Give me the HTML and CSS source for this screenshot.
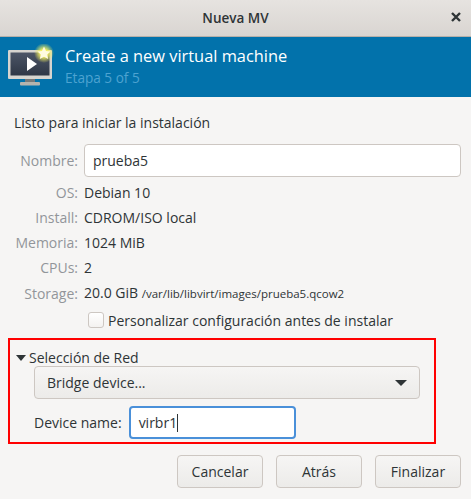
FILE: index.html
```html
<!DOCTYPE html>
<html>
<head>
    <meta charset="utf-8">
    <title>Nueva MV</title>
    <link rel="stylesheet" href="styles.css">
</head>
<body>

<div class="window">

    <div class="titlebar">
        <div class="titlebar-title">Nueva MV</div>
        <svg class="close-icon" width="10" height="10" viewBox="0 0 10 10">
            <path d="M1 1 L9 9 M9 1 L1 9" stroke="#2e3436" stroke-width="2.4" fill="none"/>
        </svg>
    </div>

    <div class="banner">
        <svg class="banner-icon" width="46" height="46" viewBox="0 0 46 46">
            <defs>
                <radialGradient id="glow">
                    <stop offset="0.35" stop-color="#f4f060"/>
                    <stop offset="1" stop-color="#f4f060" stop-opacity="0"/>
                </radialGradient>
                <linearGradient id="screen" x1="0" y1="0" x2="0" y2="1">
                    <stop offset="0" stop-color="#4c5566"/>
                    <stop offset="1" stop-color="#2f3746"/>
                </linearGradient>
            </defs>
            <rect x="0" y="6" width="44" height="29" rx="1" fill="#d6d4cf"/>
            <rect x="2.5" y="8.5" width="39" height="23" fill="url(#screen)"/>
            <rect x="17" y="35" width="10" height="3" fill="#77797a"/>
            <rect x="12" y="38" width="20" height="3.5" rx="1" fill="#b5b3ae"/>
            <path d="M19 13 L29 20 L19 27 Z" fill="#fff"/>
            <circle cx="36" cy="9" r="10" fill="url(#glow)"/>
            <path d="M36 2.5 L38 7 L42.5 7.5 L39.2 10.6 L40.2 15 L36 12.7 L31.8 15 L32.8 10.6 L29.5 7.5 L34 7 Z" fill="#fffbe0"/>
        </svg>
        <div>
            <div class="banner-title">Create a new virtual machine</div>
            <div class="banner-step">Etapa 5 of 5</div>
        </div>
    </div>

    <div class="content">

        <div class="ready-text">Listo para iniciar la instalación</div>

        <div class="summary">
            <label class="summary-label">Nombre:</label>
            <input type="text" class="text-input" value="prueba5">

            <div class="summary-label">OS:</div>
            <div class="summary-value">Debian 10</div>

            <div class="summary-label">Install:</div>
            <div class="summary-value">CDROM/ISO local</div>

            <div class="summary-label">Memoria:</div>
            <div class="summary-value">1024 MiB</div>

            <div class="summary-label">CPUs:</div>
            <div class="summary-value">2</div>

            <div class="summary-label">Storage:</div>
            <div class="summary-value">20.0 GiB <span class="summary-path">/var/lib/libvirt/images/prueba5.qcow2</span></div>
        </div>

        <div class="customize-row">
            <span class="checkbox"></span>
            <span>Personalizar configuración antes de instalar</span>
        </div>

        <div class="network-box">
            <div class="network-header">
                <span class="expander-arrow"></span>
                <span>Selección de Red</span>
            </div>
            <div class="network-body">
                <div class="combo">
                    <span>Bridge device...</span>
                    <span class="combo-arrow"></span>
                </div>
                <div class="device-row">
                    <span>Device name:</span>
                    <div class="device-input">virbr1<span class="caret"></span></div>
                </div>
            </div>
        </div>

        <div class="buttons">
            <button class="button">Cancelar</button>
            <button class="button">Atrás</button>
            <button class="button">Finalizar</button>
        </div>

    </div>

</div>

</body>
</html>
```

FILE: styles.css
```css
* {
    font-family: "Open Sans", sans-serif;
    box-sizing: border-box;
}

body {
    margin: 0;
    background: #f6f5f4;
    color: #2e3436;
    font-size: 14px;
}

.window {
    width: 471px;
    height: 499px;
    overflow: hidden;
}

.titlebar {
    height: 37px;
    display: flex;
    align-items: center;
    justify-content: center;
    position: relative;
    background: linear-gradient(#e6e3e0, #d9d5d1);
    border-bottom: 1px solid #b6b0a9;
}

.titlebar-title {
    font-weight: 600;
    font-size: 13.5px;
    color: #2e3436;
}

.close-icon {
    position: absolute;
    right: 10px;
    top: 12px;
}

.banner {
    height: 60px;
    display: flex;
    align-items: center;
    gap: 11px;
    padding-left: 8px;
    background: #0272ab;
}

.banner-icon {
    flex: none;
}

.banner-title {
    font-size: 16.4px;
    line-height: 22px;
    color: #fff;
}

.banner-step {
    font-size: 13.6px;
    line-height: 22px;
    color: #4da3d1;
}

.content {
    padding: 15px 10px 0 8px;
}

.ready-text {
    margin-left: 6px;
    line-height: 22px;
}

.summary {
    margin-top: 10px;
    display: grid;
    grid-template-columns: 70px 1fr;
    column-gap: 6px;
    row-gap: 5px;
    align-items: center;
}

.summary-label {
    text-align: right;
    color: #92959a;
    line-height: 20px;
}

.summary-value {
    line-height: 20px;
}

.summary-path {
    font-size: 11.5px;
}

.text-input {
    width: 377px;
    height: 33px;
    padding: 0 8px;
    font-size: 14px;
    color: #2e3436;
    background: #fff;
    border: 1px solid #cdc7c2;
    border-radius: 4px;
    outline: none;
}

.summary .text-input {
    margin-bottom: 1px;
}

.customize-row {
    margin: 6px 0 0 80px;
    height: 20px;
    display: flex;
    align-items: center;
    gap: 4px;
}

.checkbox {
    width: 16px;
    height: 16px;
    border: 1px solid #cdc7c2;
    border-radius: 3px;
    background: linear-gradient(#fff, #f4f2f0);
}

.network-box {
    width: 428px;
    height: 106px;
    margin-top: 8px;
    padding: 9px 14px 0 6px;
    border: 2px solid #f00;
}

.network-header {
    height: 17px;
    display: flex;
    align-items: center;
    gap: 3px;
}

.expander-arrow {
    width: 0;
    height: 0;
    border-left: 5.5px solid transparent;
    border-right: 5.5px solid transparent;
    border-top: 6px solid #2e3436;
}

.network-body {
    padding-left: 18px;
}

.combo {
    height: 33px;
    padding: 0 12px;
    display: flex;
    align-items: center;
    justify-content: space-between;
    background: linear-gradient(#f6f5f4, #ecebe9);
    border: 1px solid #cdc7c2;
    border-radius: 4px;
}

.combo-arrow {
    width: 0;
    height: 0;
    border-left: 6px solid transparent;
    border-right: 6px solid transparent;
    border-top: 6px solid #2e3436;
}

.device-row {
    margin-top: 7px;
    display: flex;
    align-items: center;
    gap: 7px;
}

.device-input {
    width: 167px;
    height: 33px;
    padding: 0 8px;
    display: flex;
    align-items: center;
    background: #fff;
    border: 2px solid #4a90d9;
    border-radius: 4px;
}

.caret {
    width: 1px;
    height: 18px;
    background: #2e3436;
}

.buttons {
    margin-top: 11px;
    display: flex;
    justify-content: flex-end;
    gap: 13px;
}

.button {
    width: 86px;
    height: 33px;
    padding: 0;
    font-size: 14px;
    color: #2e3436;
    background: linear-gradient(#f6f5f4, #ecebe9);
    border: 1px solid #cdc7c2;
    border-radius: 4px;
}
```
